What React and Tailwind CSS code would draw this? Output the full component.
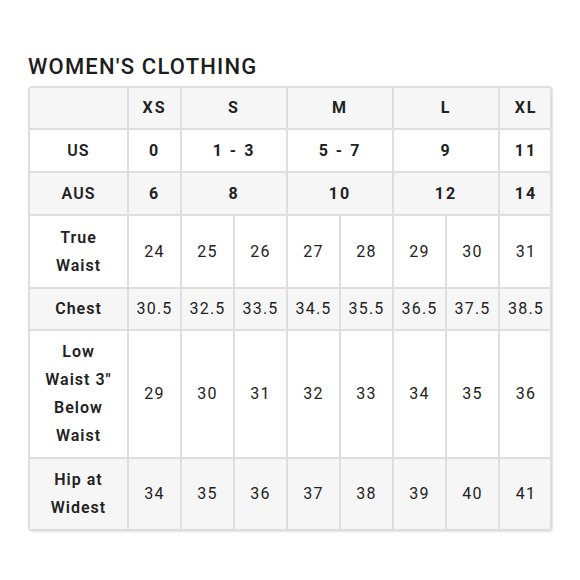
const sizeHeader = [
  { label: "XS", span: 1 },
  { label: "S", span: 2 },
  { label: "M", span: 2 },
  { label: "L", span: 2 },
  { label: "XL", span: 1 },
];

const rows = [
  { label: ["US"], bold: true, gray: false, height: "h-[43px]", cells: [["0", 1], ["1 - 3", 2], ["5 - 7", 2], ["9", 2], ["11", 1]] },
  { label: ["AUS"], bold: true, gray: true, height: "h-[43px]", cells: [["6", 1], ["8", 2], ["10", 2], ["12", 2], ["14", 1]] },
  { label: ["True", "Waist"], bold: false, gray: false, height: "h-[73px]", cells: ["24", "25", "26", "27", "28", "29", "30", "31"].map((v) => [v, 1]) },
  { label: ["Chest"], bold: false, gray: true, height: "h-[42px]", cells: ["30.5", "32.5", "33.5", "34.5", "35.5", "36.5", "37.5", "38.5"].map((v) => [v, 1]) },
  { label: ["Low", "Waist 3\"", "Below", "Waist"], bold: false, gray: false, height: "h-[128px]", cells: ["29", "30", "31", "32", "33", "34", "35", "36"].map((v) => [v, 1]) },
  { label: ["Hip at", "Widest"], bold: false, gray: true, height: "h-[71px]", cells: ["34", "35", "36", "37", "38", "39", "40", "41"].map((v) => [v, 1]) },
];

function App() {
  return (
    <main className="min-h-[580px] w-[580px] bg-white pl-[28px] pt-[54px] text-[#222] [font-family:Roboto,'Liberation_Sans',sans-serif]">
      <h1 className="text-[22px] font-medium leading-[26px] tracking-[1.2px] text-[#1d1d1d]">WOMEN'S CLOTHING</h1>

      <div className="mt-[6px] w-[524px] overflow-hidden rounded-[4px] border-2 border-[#dedede] shadow-[1px_1px_2px_rgba(0,0,0,0.12)]">
        <table className="w-full table-fixed border-collapse text-center text-[16px]">
          <colgroup>
            <col className="w-[98px]" />
            <col className="w-[53px]" />
            <col className="w-[53px]" />
            <col className="w-[53px]" />
            <col className="w-[53px]" />
            <col className="w-[53px]" />
            <col className="w-[53px]" />
            <col className="w-[53px]" />
            <col className="w-[53px]" />
          </colgroup>
          <tbody>
            <tr className="h-[41px] bg-[#f6f6f6]">
              <td className="border-2 border-t-0 border-l-0 border-[#dedede]" />
              {sizeHeader.map((size, index) => (
                <td
                  key={size.label}
                  colSpan={size.span}
                  className={`border-2 border-t-0 border-[#dedede] font-bold tracking-[2px] ${index === sizeHeader.length - 1 ? "border-r-0" : ""}`}
                >
                  {size.label}
                </td>
              ))}
            </tr>

            {rows.map((row, rowIndex) => (
              <tr key={row.label.join(" ")} className={`${row.height} ${row.gray ? "bg-[#f6f6f6]" : "bg-white"}`}>
                <td
                  className={`border-2 border-l-0 border-[#dedede] font-semibold leading-[28px] tracking-[1px] ${rowIndex === rows.length - 1 ? "border-b-0" : ""}`}
                >
                  {row.label.map((line) => (
                    <div key={line}>{line}</div>
                  ))}
                </td>
                {row.cells.map(([value, span], index) => (
                  <td
                    key={index}
                    colSpan={span}
                    className={`border-2 border-[#dedede] ${row.bold ? "font-bold tracking-[2px]" : "tracking-[1.2px]"} ${index === row.cells.length - 1 ? "border-r-0" : ""} ${rowIndex === rows.length - 1 ? "border-b-0" : ""}`}
                  >
                    {value}
                  </td>
                ))}
              </tr>
            ))}
          </tbody>
        </table>
      </div>
    </main>
  );
}

export default App;
